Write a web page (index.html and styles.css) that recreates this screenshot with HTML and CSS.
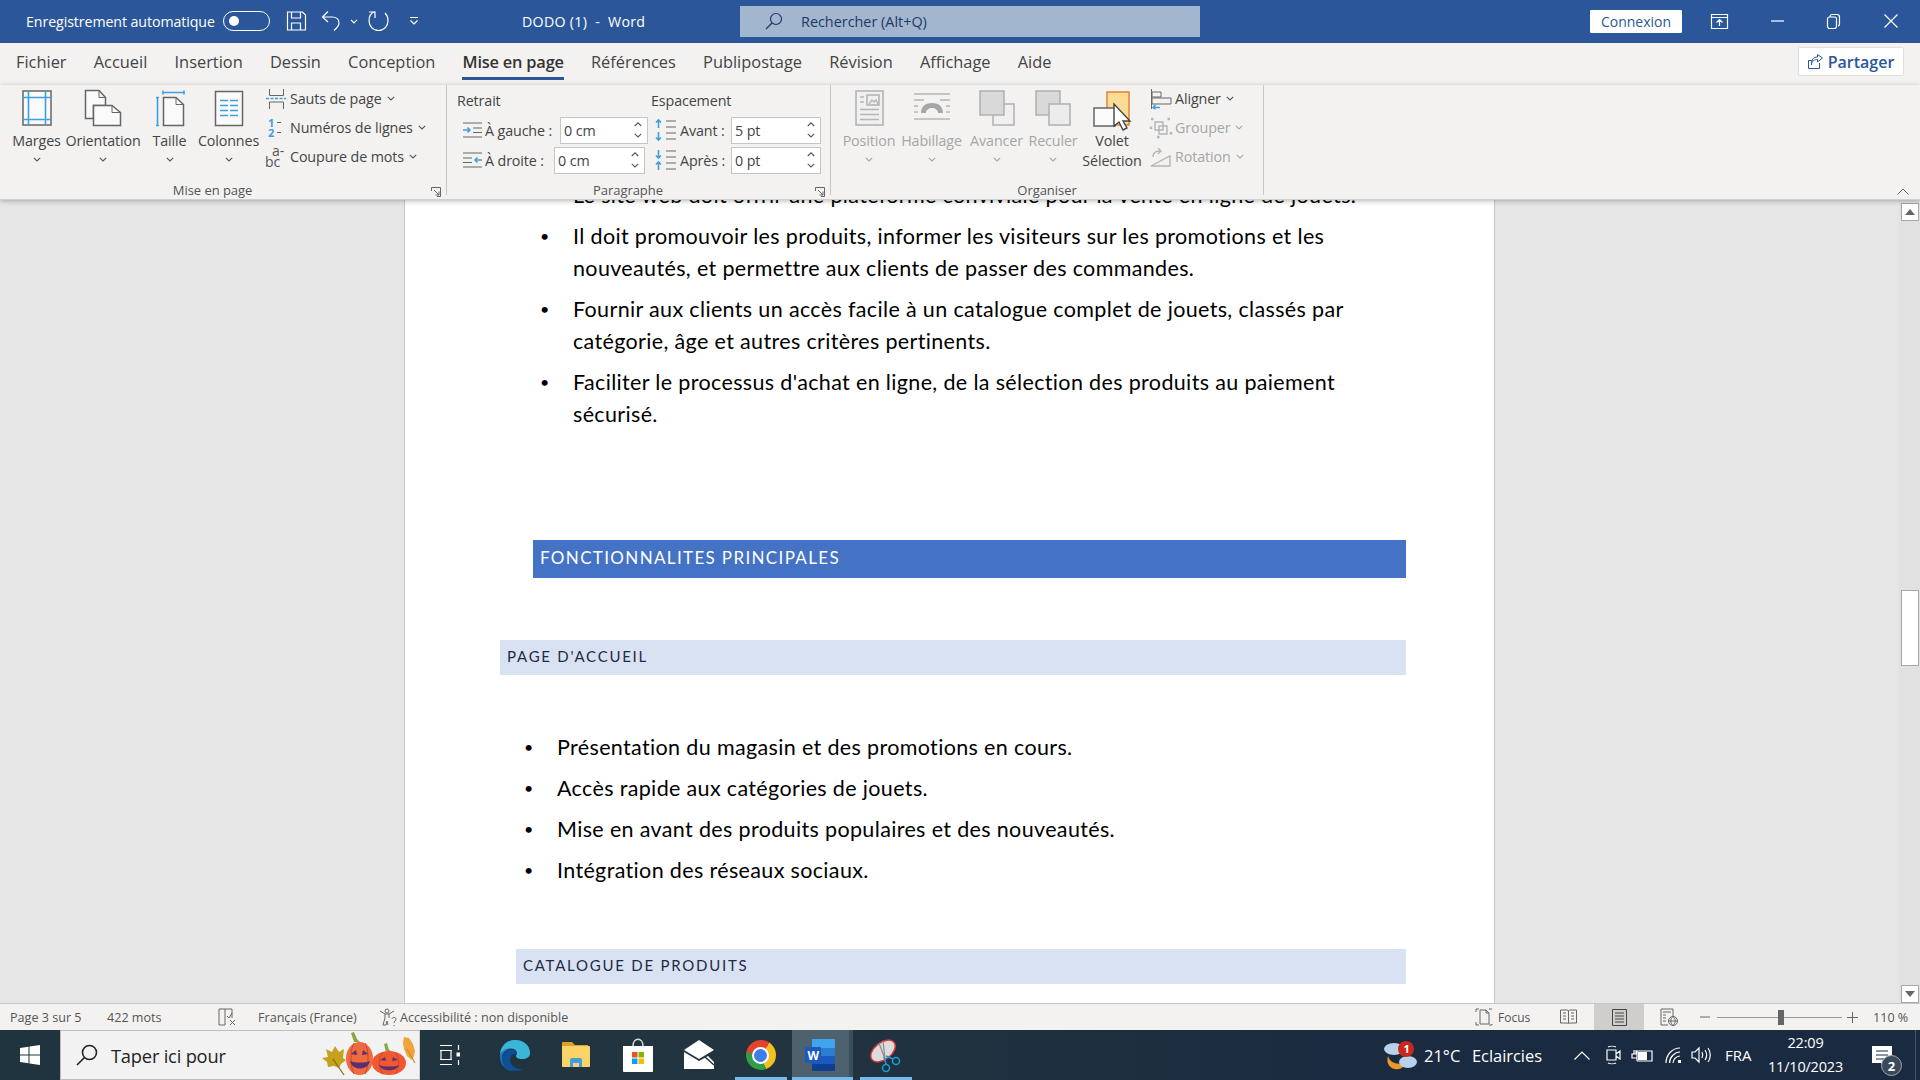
FILE: index.html
```html
<!DOCTYPE html>
<html lang="fr">
<head>
<meta charset="utf-8">
<title>DODO (1) - Word</title>
<link rel="stylesheet" href="styles.css">
</head>
<body>
<div class="app">
  <header class="titlebar">
    <span class="autosave">Enregistrement automatique</span>
    <span class="toggle"><span class="toggle-dot"></span></span>
    <svg class="qat save" width="22" height="20" viewBox="0 0 22 20"><path class="w" d="M2.5 1h15l3 3v15h-18zM6.500 1v6h9V1M6.500 19v-7h9v7"/></svg>
    <svg class="qat undo" width="20" height="22" viewBox="0 0 20 22"><path class="w" d="M7 1.500 1.500 7 7 12M2 7h9c5 0 7 3 7 6 0 3-2 5-5 7.500"/></svg>
    <svg class="qat mini" width="8" height="5" viewBox="0 0 8 5"><path class="w" d="M1 .8l3 3 3-3"/></svg>
    <svg class="qat redo" width="21" height="22" viewBox="0 0 21 22"><path class="w" d="M7 1.500c-4 1.500-6 5-6 9 0 5.500 4 10 9.500 10s9.500-4.500 9.500-10c0-3-1-5.500-3-7.500M7 1.500V8M7 2H1"/></svg>
    <svg class="qat more" width="10" height="10" viewBox="0 0 10 10"><path class="w" d="M1 1.500h8M1.500 4.500 5 8l3.500-3.500"/></svg>
    <span class="doc-name">DODO (1)&nbsp; -&nbsp; Word</span>
    <div class="search">
      <svg width="18" height="18" viewBox="0 0 18 18"><circle class="n" cx="11" cy="7" r="5.500"/><path class="n" d="M7 11 1 17"/></svg>
      <span>Rechercher (Alt+Q)</span>
    </div>
    <span class="connexion">Connexion</span>
    <svg class="win-ic display" width="17" height="15" viewBox="0 0 17 15"><path class="w" d="M.500.500h16v14H.500zM.500 3.500h16M8.500 12V6M5.500 8.500l3-3 3 3"/></svg>
    <svg class="win-ic minim" width="13" height="2" viewBox="0 0 13 2"><path class="w" d="M0 1h13"/></svg>
    <svg class="win-ic restore" width="13" height="15" viewBox="0 0 13 15"><path class="w" d="M3 2.500c0-1 1-2 2-2h5c1.500 0 2.500 1 2.500 2.500v7c0 1-.5 2-1.500 2M.500 5c0-1 1-2 2-2h5c1 0 2 1 2 2v7c0 1.500-1 2.500-2 2.500h-5c-1 0-2-1-2-2.500z"/></svg>
    <svg class="win-ic closex" width="14" height="14" viewBox="0 0 14 14"><path class="w" d="m.5.500 13 13M13.500.500l-13 13"/></svg>
  </header>

  <nav class="tabs">
    <span class="tab">Fichier</span>
    <span class="tab">Accueil</span>
    <span class="tab">Insertion</span>
    <span class="tab">Dessin</span>
    <span class="tab">Conception</span>
    <span class="tab active">Mise en page</span>
    <span class="tab">Références</span>
    <span class="tab">Publipostage</span>
    <span class="tab">Révision</span>
    <span class="tab">Affichage</span>
    <span class="tab">Aide</span>
    <span class="share">
      <svg width="15" height="15" viewBox="0 0 15 15"><path class="b" d="M.500 6.500v8h11V9M.500 6.500h4M3.500 11c0-4 3-5.500 6-5.500V8l5-4-5-3.500V3c-4 0-6.500 3-6 8z"/></svg>
      Partager
    </span>
  </nav>

  <section class="ribbon">
    <div class="group g-page">
      <div class="group-body">
        <div class="big w-marges">
          <svg class="big-ic" width="30" height="36" viewBox="0 0 30 36"><rect class="pg" x="1" y="1" width="28" height="34"/><path class="bl" d="M6.500 1v34M23.500 1v34M1 7.500h28M1 29.500h28"/></svg>
          <span>Marges</span>
          <svg class="chev" width="8" height="5" viewBox="0 0 8 5"><path d="M.8.800 4 4 7.200.8"/></svg>
        </div>
        <div class="big w-orient">
          <svg class="big-ic" width="36" height="36" viewBox="0 0 36 36"><path class="pg" d="M.500.500H14l6.500 7v8h-12v13H.500z"/><path class="pg" d="M8.500 15.500H27l8.500 7v13h-27z"/><path class="dk" d="M14 .500v7h6.500M27 15.500v7h8.500"/></svg>
          <span>Orientation</span>
          <svg class="chev" width="8" height="5" viewBox="0 0 8 5"><path d="M.8.800 4 4 7.200.8"/></svg>
        </div>
        <div class="big w-taille">
          <svg class="big-ic" width="28" height="36" viewBox="0 0 28 36"><path class="bl" d="M7 2.500h21M7 .5v4M28 .5v4M1.500 7.500v28M0 7.500h3M0 35.500h3"/><path class="pg" d="M7.500 7.500H20l7.500 7v21h-20z"/><path class="dk" d="M20 7.500v7h7.500"/></svg>
          <span>Taille</span>
          <svg class="chev" width="8" height="5" viewBox="0 0 8 5"><path d="M.8.800 4 4 7.200.8"/></svg>
        </div>
        <div class="big w-cols">
          <svg class="big-ic" width="28" height="36" viewBox="0 0 28 36"><rect class="pg" x=".5" y="1.500" width="27" height="34"/><path class="bl" d="M5 10.500h8M15 10.500h8M5 15.500h8M15 15.500h8M5 20.500h8M15 20.500h8M5 25.500h8M15 25.500h8"/></svg>
          <span>Colonnes</span>
          <svg class="chev" width="8" height="5" viewBox="0 0 8 5"><path d="M.8.800 4 4 7.200.8"/></svg>
        </div>
        <div class="smalls s-page">
          <div class="small">
            <svg width="24" height="20" viewBox="0 0 24 20"><path class="dk" d="M4.500 0v6.500h14V0M4.500 20v-7h14v7"/><path class="bl dash" d="M1 9.500h20"/></svg>
            <span>Sauts de page</span>
            <svg class="chev" width="8" height="5" viewBox="0 0 8 5"><path d="M.8.800 4 4 7.200.8"/></svg>
          </div>
          <div class="small">
            <svg width="24" height="20" viewBox="0 0 24 20"><text class="num" x="3" y="9">1</text><text class="num" x="3" y="19">2</text><path class="dk" d="M12 4.500h4M12 14.500h4"/></svg>
            <span>Numéros de lignes</span>
            <svg class="chev" width="8" height="5" viewBox="0 0 8 5"><path d="M.8.800 4 4 7.200.8"/></svg>
          </div>
          <div class="small">
            <svg width="24" height="22" viewBox="0 0 24 22"><text class="hy" x="7" y="10">a-</text><text class="hy" x="0" y="21">bc</text></svg>
            <span>Coupure de mots</span>
            <svg class="chev" width="8" height="5" viewBox="0 0 8 5"><path d="M.8.800 4 4 7.200.8"/></svg>
          </div>
        </div>
      </div>
      <div class="group-label"><span>Mise en page</span>
        <svg class="launcher" width="10" height="10" viewBox="0 0 10 10"><path class="dk" d="M.5 4V.500h9v9H6M3 3l5 5M8 4.500V8H4.500"/></svg>
      </div>
    </div>

    <div class="group g-para">
      <div class="group-body para-body">
        <div class="para-col col-indent">
          <div class="para-title">Retrait</div>
          <div class="para-row">
            <svg width="21" height="16" viewBox="0 0 21 16"><path class="dk" d="M1 1h19M11 6h9M11 10.500h9M1 15h19"/><path class="bl" d="M1 8h7M5.500 5.500 8 8l-2.500 2.500"/></svg>
            <span class="p-label">À gauche :</span>
            <div class="spin sp-g"><span>0 cm</span><span class="arrows"><svg class="chev" width="8" height="5" viewBox="0 0 8 5"><path d="M.8 4 4 .8 7.200 4"/></svg><svg class="chev" width="8" height="5" viewBox="0 0 8 5"><path d="M.8.800 4 4 7.200.8"/></svg></span></div>
          </div>
          <div class="para-row">
            <svg width="21" height="16" viewBox="0 0 21 16"><path class="dk" d="M1 1h19M1 6h9M1 10.500h9M1 15h19"/><path class="bl" d="M20 8h-7M15.500 5.500 13 8l2.500 2.500"/></svg>
            <span class="p-label">À droite :</span>
            <div class="spin sp-d"><span>0 cm</span><span class="arrows"><svg class="chev" width="8" height="5" viewBox="0 0 8 5"><path d="M.8 4 4 .8 7.200 4"/></svg><svg class="chev" width="8" height="5" viewBox="0 0 8 5"><path d="M.8.800 4 4 7.200.8"/></svg></span></div>
          </div>
        </div>
        <div class="para-col col-space">
          <div class="para-title">Espacement</div>
          <div class="para-row">
            <svg width="23" height="22" viewBox="0 0 23 22"><path class="bl" d="M3.500 1v8M1 3.500 3.500 1 6 3.500M3.500 13v8M1 18.500 3.500 21 6 18.500"/><path class="dk" d="M11 2h10M11 8h10M11 14h10M11 20h10"/></svg>
            <span class="p-label">Avant :</span>
            <div class="spin sp-s"><span>5 pt</span><span class="arrows"><svg class="chev" width="8" height="5" viewBox="0 0 8 5"><path d="M.8 4 4 .8 7.200 4"/></svg><svg class="chev" width="8" height="5" viewBox="0 0 8 5"><path d="M.8.800 4 4 7.200.8"/></svg></span></div>
          </div>
          <div class="para-row">
            <svg width="23" height="22" viewBox="0 0 23 22"><path class="bl" d="M3.500 1v8M1 6.500 3.500 9 6 6.500M3.500 13v8M1 15.500 3.500 13 6 15.500"/><path class="dk" d="M11 2h10M11 8h10M11 14h10M11 20h10"/></svg>
            <span class="p-label">Après :</span>
            <div class="spin sp-s"><span>0 pt</span><span class="arrows"><svg class="chev" width="8" height="5" viewBox="0 0 8 5"><path d="M.8 4 4 .8 7.200 4"/></svg><svg class="chev" width="8" height="5" viewBox="0 0 8 5"><path d="M.8.800 4 4 7.200.8"/></svg></span></div>
          </div>
        </div>
      </div>
      <div class="group-label"><span>Paragraphe</span>
        <svg class="launcher" width="10" height="10" viewBox="0 0 10 10"><path class="dk" d="M.5 4V.500h9v9H6M3 3l5 5M8 4.500V8H4.500"/></svg>
      </div>
    </div>

    <div class="group g-org">
      <div class="group-body">
        <div class="big off w-pos">
          <svg class="big-ic" width="28" height="36" viewBox="0 0 28 36"><rect class="pg-off" x="1" y="1" width="27" height="34"/><rect class="box-off" x="12" y="5" width="12" height="10"/><path class="gr" d="M5 7h4M5 12h4M5 19.500h19M5 24.500h19M5 29.500h19M14 14l3-4 2 2 2-2 2 4"/></svg>
          <span>Position</span>
          <svg class="chev" width="8" height="5" viewBox="0 0 8 5"><path d="M.8.800 4 4 7.200.8"/></svg>
        </div>
        <div class="big off w-hab">
          <svg class="big-ic" width="36" height="36" viewBox="0 0 36 36"><path class="gr" d="M0 4h36M0 10h10M26 10h10M0 16h4M32 16h4M0 22h4M32 22h4M0 29h36"/><path class="arch" d="M7 23c0-6 4-10 11-10s11 4 11 10h-5c0-3-3-5-6-5s-6 2-6 5z"/></svg>
          <span>Habillage</span>
          <svg class="chev" width="8" height="5" viewBox="0 0 8 5"><path d="M.8.800 4 4 7.200.8"/></svg>
        </div>
        <div class="big off w-av">
          <svg class="big-ic" width="36" height="36" viewBox="0 0 36 36"><rect class="pg-off" x="14" y="14" width="21" height="21"/><rect class="box-off fill-g" x="1" y="1" width="24" height="24"/></svg>
          <span>Avancer</span>
          <svg class="chev" width="8" height="5" viewBox="0 0 8 5"><path d="M.8.800 4 4 7.200.8"/></svg>
        </div>
        <div class="big off w-rec">
          <svg class="big-ic" width="36" height="36" viewBox="0 0 36 36"><rect class="box-off fill-g" x="1" y="1" width="24" height="24"/><rect class="box-off fill-l" x="14" y="14" width="21" height="21"/></svg>
          <span>Reculer</span>
          <svg class="chev" width="8" height="5" viewBox="0 0 8 5"><path d="M.8.800 4 4 7.200.8"/></svg>
        </div>
        <div class="big w-volet">
          <svg class="big-ic" width="38" height="40" viewBox="0 0 38 40"><rect class="orange" x="14" y="1" width="22" height="33"/><rect class="pg" x="1" y="17" width="21" height="18"/><path class="cursor" d="M21 13v22l5-4 4 8 4-2-4-7h7z"/></svg>
          <span class="two-line">Volet<br>Sélection</span>
        </div>
        <div class="smalls s-org">
          <div class="small">
            <svg width="22" height="20" viewBox="0 0 22 20"><path class="dk" d="M1.500 0v20M2 3h9v5H2zM2 9h19v6H2z"/><path class="bl" d="M10 18.500H3M5.500 16 3 18.500 5.500 20"/></svg>
            <span>Aligner</span>
            <svg class="chev" width="8" height="5" viewBox="0 0 8 5"><path d="M.8.800 4 4 7.200.8"/></svg>
          </div>
          <div class="small off">
            <svg width="22" height="20" viewBox="0 0 22 20"><path class="gr dots" d="M1 1h20v18H1z"/><path class="gr" d="M5 4h8v8H5zM9 8h8v8H9z"/></svg>
            <span>Grouper</span>
            <svg class="chev" width="8" height="5" viewBox="0 0 8 5"><path d="M.8.800 4 4 7.200.8"/></svg>
          </div>
          <div class="small off">
            <svg width="22" height="20" viewBox="0 0 22 20"><path class="gr" d="M1 19 20 9v10zM3 10c0-4 3-6 7-6M8 1l3 3-3 3"/></svg>
            <span>Rotation</span>
            <svg class="chev" width="8" height="5" viewBox="0 0 8 5"><path d="M.8.800 4 4 7.200.8"/></svg>
          </div>
        </div>
      </div>
      <div class="group-label"><span>Organiser</span></div>
    </div>
    <div class="group-fill">
      <svg width="12" height="7" viewBox="0 0 12 7"><path class="dk" d="M.5 6.500 6 1l5.500 5.500"/></svg>
    </div>
  </section>

  <main class="workspace">
    <div class="page">
      <ul class="list first-list">
        <li><span>Le site web doit offrir une plateforme conviviale pour la vente en ligne de jouets.</span></li>
        <li><span>Il doit promouvoir les produits, informer les visiteurs sur les promotions et les<br>nouveautés, et permettre aux clients de passer des commandes.</span></li>
        <li><span>Fournir aux clients un accès facile à un catalogue complet de jouets, classés par<br>catégorie, âge et autres critères pertinents.</span></li>
        <li><span>Faciliter le processus d'achat en ligne, de la sélection des produits au paiement<br>sécurisé.</span></li>
      </ul>
      <h1 class="h-main">FONCTIONNALITES PRINCIPALES</h1>
      <h2 class="h-sub h-accueil">PAGE D'ACCUEIL</h2>
      <ul class="list second-list">
        <li><span>Présentation du magasin et des promotions en cours.</span></li>
        <li><span>Accès rapide aux catégories de jouets.</span></li>
        <li><span>Mise en avant des produits populaires et des nouveautés.</span></li>
        <li><span>Intégration des réseaux sociaux.</span></li>
      </ul>
      <h2 class="h-sub h-cat">CATALOGUE DE PRODUITS</h2>
    </div>
    <div class="scrollbar">
      <span class="sb-btn"><svg width="10" height="6" viewBox="0 0 10 6"><path class="tri" d="M5 0l5 6H0z"/></svg></span>
      <span class="sb-thumb"></span>
      <span class="sb-btn"><svg width="10" height="6" viewBox="0 0 10 6"><path class="tri" d="M0 0h10L5 6z"/></svg></span>
    </div>
  </main>

  <footer class="status">
    <span class="st st-page">Page 3 sur 5</span>
    <span class="st st-words">422 mots</span>
    <svg class="st-check" width="18" height="18" viewBox="0 0 18 18"><path class="dk" d="M7 17H1V1h13v9M7 1v16M12 12l5 5M17 12l-5 5M9 8l2 2 3-5"/></svg>
    <span class="st st-lang">Français (France)</span>
    <svg class="st-acc" width="18" height="18" viewBox="0 0 18 18"><circle class="dk" cx="8" cy="3" r="2"/><path class="dk" d="M1 3l5 3h4l5-3M6 6v4l-2 7h3l1-4 1 4M10 6v4M13 11c0-2 4-2 4 0s-2 2-2 4M15 17v1"/></svg>
    <span class="st st-access">Accessibilité : non disponible</span>
    <svg class="st-focus" width="18" height="18" viewBox="0 0 18 18"><path class="dk" d="M1 4V1h3M14 1h3M1 14v3h3M14 17h3v-1M5 2h6l3 3v11H5zM11 2v3h3"/></svg>
    <span class="st st-foc">Focus</span>
    <svg class="st-read" width="17" height="16" viewBox="0 0 17 16"><path class="dk" d="M.5 1h7l1 1 1-1h7v13h-7l-1 1-1-1h-7zM8.500 2v12M3 4h3M3 7h3M3 10h3M11 4h3M11 7h3M11 10h3"/></svg>
    <span class="st-print"><svg width="15" height="17" viewBox="0 0 15 17"><path class="dk2" d="M.5.500h14v16H.5zM3 4h9M3 7h9M3 10h9M3 13h9"/></svg></span>
    <svg class="st-web" width="18" height="18" viewBox="0 0 18 18"><path class="dk" d="M8 17H1V1h12v7M3 4h8M3 7h3M3 10h3M3 13h3"/><circle class="dk" cx="13" cy="13" r="4.500"/><path class="dk" d="M8.500 13h9M13 8.500c-3 3-3 6 0 9M13 8.500c3 3 3 6 0 9"/></svg>
    <svg class="st-minus" width="10" height="2" viewBox="0 0 10 2"><path class="dk" d="M0 1h10"/></svg>
    <span class="slider"><span class="slider-thumb"></span></span>
    <svg class="st-plus" width="11" height="11" viewBox="0 0 11 11"><path class="dk" d="M0 5.500h11M5.500 0v11"/></svg>
    <span class="st st-zoom">110 %</span>
  </footer>

  <footer class="taskbar">
    <span class="start"><svg width="20" height="20" viewBox="0 0 20 20"><path class="white" d="M0 3l8.500-1.200v7.700H0zM9.500 1.600 20 0v9.500H9.500zM0 10.500h8.500v7.700L0 17zM9.500 10.500H20V20L9.500 18.400z"/></svg></span>
    <div class="tb-search">
      <svg width="22" height="22" viewBox="0 0 22 22"><circle class="k" cx="13.500" cy="8.500" r="7"/><path class="k" d="M8.500 13.500 1 21"/></svg>
      <span>Taper ici pour</span>
      <svg class="pumpkins" width="96" height="46" viewBox="0 0 96 46">
        <path class="leaf1" d="M1 26l6-1-2-8 6 3 3-6 4 6 5-3-1 9 3 2-5 4-2 4-5-2-6 1-1-5z"/><path class="stem-l" d="M12 27l11 16"/>
        <path class="leaf2" d="M83 5l5 1 4 6 2 7-1 5-2 4-5-4-3-7-1-6z"/><path class="stem-o" d="M86 17l8 14"/>
        <path class="stem" d="M33 10l-3-9 3-1 3 7 3 3z"/>
        <ellipse class="pk" cx="38.500" cy="26.500" rx="13.500" ry="16.500"/>
        <path class="pk-line" d="M33 11c-4 6-4 24 0 31M44 11c4 6 4 24 0 31"/>
        <path class="pk-f" d="M30 22l5-4 1 5zM47 22l-5-4-1 5zM29 29c5 2 15 2 20 0-2 10-18 10-20 0z"/>
        <path class="stem" d="M65 20l-2-8 3-1 2 7 4 2z"/>
        <ellipse class="pk2" cx="68" cy="31" rx="17" ry="12"/>
        <path class="pk-line" d="M62 20c-5 5-5 17 0 22M74 20c5 5 5 17 0 22"/>
        <path class="pk-f" d="M59 28l5-3 1 4zM77 28l-5-3-1 4zM58 33c5 2 15 2 20 0-2 7-18 7-20 0z"/>
      </svg>
    </div>
    <span class="tb-slot tb-view"><svg width="20" height="20" viewBox="0 0 20 20"><path class="w" d="M0 .5h12M0 5.500h12M0 14.500h12M0 19.500h12M1 5.500v9M11 5.500v9M18.500 0v5M18.500 15v5"/><rect class="white" x="16.500" y="7.500" width="3.500" height="4"/></svg></span>
    <span class="tb-slot"><svg width="32" height="32" viewBox="0 0 32 32"><path class="edge-b" d="M1 17C1 7 8 1 16 1c9 0 15 6 15 13 0 4-4 6-8 6-3 0-6-1-6-3 0-1 1-1 1-3 0-3-3-5-7-4-5 1-8 5-8 9 0 6 4 12 12 13C7 32 1 26 1 17z"/><path class="edge-g" d="M16 1c9 0 15 6 15 13 0 4-4 6-8 6-3 0-6-1-6-3 0-1 1-1 1-3 0-4-6-6-11-4-3 1-5 3-6 5C2 7 8 1 16 1z"/><path class="edge-d" d="M13 32c-6-1-10-6-10-12 0-4 3-8 8-9 4-1 7 1 7 4-3-1-7 1-7 6 0 5 5 9 11 9 2 0 3-.5 5-1.500-3 2-8 4-14 3z"/></svg></span>
    <span class="tb-slot"><svg width="28" height="28" viewBox="0 0 28 28"><path class="folder-b" d="M0 2c0-1 1-1 1-1h9l3 3h13v4H0z"/><path class="folder" d="M0 5h27c1 0 1 1 1 1v19c0 1-1 1-1 1H1c-1 0-1-1-1-1z"/><path class="folder-w" d="M8 26v-7c0-1 1-2 2-2h8c1 0 2 1 2 2v7h-3v-4h-6v4z"/></svg></span>
    <span class="tb-slot"><svg width="30" height="34" viewBox="0 0 30 34"><path class="bag" d="M0 8h30v25c0 1-1 1-1 1H1s-1 0-1-1z"/><path class="bag-h" d="M10 8c0-9 10-9 10 0"/><rect class="ms-r" x="9" y="14" width="5.500" height="5.500"/><rect class="ms-g" x="15.500" y="14" width="5.500" height="5.500"/><rect class="ms-b" x="9" y="20.500" width="5.500" height="5.500"/><rect class="ms-y" x="15.500" y="20.500" width="5.500" height="5.500"/></svg></span>
    <span class="tb-slot"><svg width="30" height="30" viewBox="0 0 30 30"><path class="white" d="M15 0 30 10 15 19 0 10z"/><path class="white" d="M0 12l15 9 9-5 6 6v7H0z"/><path class="mail-l" d="M21 17l9 8"/></svg></span>
    <span class="tb-slot tb-under"><span class="chrome"><span class="chrome-in"></span></span></span>
    <span class="tb-slot tb-word">
      <svg width="30" height="34" viewBox="0 0 30 34"><path class="w1" d="M7 1h22c.5 0 1 .5 1 1v8H7z"/><path class="w2" d="M7 10h23v8H7z"/><path class="w3" d="M7 18h23v8H7z"/><path class="w4" d="M7 26h23v6c0 .5-.5 1-1 1H8c-.5 0-1-.5-1-1z"/><rect class="w5" x="0" y="9" width="16" height="16" rx="1"/><text class="w-t" x="2.500" y="21.500">W</text></svg>
    </span>
    <span class="tb-slot tb-under tb-snip"><svg width="30" height="36" viewBox="0 0 30 36"><ellipse class="sn1" cx="12" cy="14" rx="14" ry="8.500" transform="rotate(-38 12 14)"/><path class="sn2" d="M8 6l6 16M12 4l2 18"/><circle class="sn3" cx="15" cy="31" r="3.500"/><circle class="sn3" cx="25" cy="24" r="3.500"/><path class="sn3" d="M15 27 13 20M22 22l-7-3"/></svg></span>

    <div class="tray">
      <svg class="tr-weather" width="33" height="30" viewBox="0 0 33 30">
        <path class="moon" d="M4 16c2 8 12 10 20 5-3 6-8 9-13 8-6-1-9-7-7-13z"/>
        <ellipse class="cloud" cx="10" cy="9" rx="10" ry="6"/><ellipse class="cloud" cx="24" cy="22" rx="9" ry="6"/>
        <circle class="badge" cx="22" cy="9" r="8"/><text class="badge-t" x="19.500" y="13">1</text>
      </svg>
      <span class="tr-temp">21°C</span>
      <span class="tr-sky">Eclaircies</span>
      <svg class="tr-up" width="16" height="9" viewBox="0 0 16 9"><path class="w" d="M.5 8.500 8 1l7.500 7.500"/></svg>
      <svg class="tr-meet" width="15" height="18" viewBox="0 0 15 18"><path class="w" d="M2 1c2-1 6-1 8 0M2 17c2 1 6 1 8 0M1 4h9v10H1zM10 8l4-3v8l-4-3"/></svg>
      <svg class="tr-batt" width="21" height="13" viewBox="0 0 21 13"><path class="w" d="M5 2h15v10H5M5 2v3M5 9v3M0 5h5v4H0zM2 1v4M4 1v4"/><rect class="white" x="6" y="3" width="9" height="8"/></svg>
      <svg class="tr-wifi" width="16" height="16" viewBox="0 0 16 16"><path class="w" d="M1 16C1 8 7 1 15 1M4.500 16C4.500 10 10 5 15 5M8 16c0-3 3-7 7-7"/><rect class="white" x="13" y="13" width="3" height="3"/></svg>
      <svg class="tr-vol" width="20" height="16" viewBox="0 0 20 16"><path class="w" d="M1 5h3l4-4v14l-4-4H1zM11 5c1 2 1 4 0 6M14 3c2 3 2 7 0 10M17 1c3 4 3 10 0 14"/></svg>
      <span class="tr-lang">FRA</span>
      <span class="tr-clock"><span>22:09</span><span>11/10/2023</span></span>
      <span class="tr-note">
        <svg width="20" height="18" viewBox="0 0 20 18"><path class="white" d="M0 0h20v17h-8l-3 1v-1H0z"/><path class="note-l" d="M4 5h12M4 9h12M4 13h8"/></svg>
        <span class="note-badge">2</span>
      </span>
    </div>
  </footer>
</div>
</body>
</html>
```
FILE: styles.css
```css
* { box-sizing: border-box; }
html, body { margin: 0; padding: 0; }
body { font-family: "Open Sans", "Noto Sans", sans-serif; color: #444; overflow: hidden; }
svg { display: block; flex: none; overflow: visible; }
svg path, svg rect, svg circle, svg ellipse { fill: none; }
.app { width: 1920px; height: 1080px; display: flex; flex-direction: column; overflow: hidden; background: #f3f2f1; }

/* stroke helpers */
.w { stroke: #fff; stroke-width: 1.2; }
svg .white { fill: #fff; }
.n { stroke: #1f3864; stroke-width: 1.2; }
.b { stroke: #2b579a; stroke-width: 1; }
.k { stroke: #222; stroke-width: 1.6; }
.dk { stroke: #666; stroke-width: 1; }
.dk2 { stroke: #444; stroke-width: 1; }
.bl { stroke: #3f9fdf; stroke-width: 1.6; }
.dash { stroke-dasharray: 3 1.5; }
.gr { stroke: #b5b5b5; stroke-width: 1.4; }
.dots { stroke-dasharray: 2.500 14; stroke-width: 2.500; }
svg .pg { fill: #fafafa; stroke: #666; stroke-width: 1.5; }
svg .pg-off { fill: #f0f0f0; stroke: #b0b0b0; stroke-width: 1.5; }
svg .box-off { stroke: #b0b0b0; stroke-width: 1.500; }
svg .fill-g { fill: #d9d9d9; }
svg .fill-l { fill: #ececec; }
svg .arch { fill: #a6a6a6; }
svg .orange { fill: #fadc94; stroke: #e8883a; stroke-width: 1.6; }
svg .cursor { fill: #fff; stroke: #444; stroke-width: 1.4; }
.num { font: 700 11px "Open Sans", sans-serif; fill: #3f9fdf; }
.hy { font: 400 14px "Open Sans", sans-serif; fill: #555; }

/* title bar */
.titlebar { height: 43px; background: #2b579a; color: #fff; display: flex; align-items: center; flex: none; font-size: 14.200px; padding-bottom: 1px; }
.autosave { margin-left: 26px; width: 197px; white-space: nowrap; letter-spacing: -.08px; }
.toggle { width: 47px; height: 20px; border: 1.500px solid #fff; border-radius: 10px; display: flex; align-items: center; padding-left: 5px; }
.toggle-dot { width: 10px; height: 10px; border-radius: 50%; background: #fff; }
.qat.save { margin-left: 15px; }
.qat.undo { margin-left: 14px; }
.qat.mini { margin-left: 9px; }
.qat.redo { margin-left: 10px; }
.qat.more { margin-left: 20px; }
.doc-name { margin-left: 103px; width: 218px; white-space: nowrap; letter-spacing: .3px; }
.search { width: 460px; height: 31px; background: #a3b6cf; color: #1f3864; display: flex; align-items: center; padding-left: 25px; gap: 18px; font-size: 14.400px; }
.connexion { margin-left: 390px; width: 92px; height: 23px; background: #fff; color: #2b579a; border-radius: 1px; display: flex; align-items: center; justify-content: center; font-size: 14px; }
.win-ic.display { margin-left: 29px; }
.win-ic.minim { margin-left: 43px; }
.win-ic.restore { margin-left: 43px; }
.win-ic.closex { margin-left: 44px; }

/* tabs */
.tabs { height: 42px; flex: none; display: flex; align-items: center; padding-left: 16px; gap: 27.200px; font-size: 16.400px; color: #444; }
.tab { position: relative; white-space: nowrap; padding-bottom: 6px; }
.tab.active { color: #333; font-weight: 600; letter-spacing: -.2px; }
.tab.active::after { content: ""; position: absolute; left: 0; right: 0; bottom: -1px; height: 3px; background: #2b579a; }
.share { margin: 0 16px 5px auto; width: 106px; height: 29px; background: #fff; border: 1px solid #e1dfdd; border-radius: 2px; color: #2b579a; font-weight: 600; font-size: 16px; display: flex; align-items: center; justify-content: center; gap: 5px; }

/* ribbon */
.ribbon { height: 115px; flex: none; display: flex; font-size: 14.300px; letter-spacing: -.12px; background: #f3f2f1; position: relative; z-index: 5; box-shadow: 0 1px 5px rgba(0,0,0,.28); border-bottom: 1px solid #d0d0d0; }
.group { display: flex; flex-direction: column; border-right: 1px solid #c8c6c4; margin-bottom: 4px; flex: none; }
.g-page { width: 447px; }
.g-para { width: 384px; }
.g-org { width: 433px; }
.group-fill { flex: 1; display: flex; align-items: flex-end; justify-content: flex-end; padding: 0 11px 4px; }
.group-body { height: 97px; display: flex; padding-top: 5px; flex: none; }
.g-page .group-body { padding-left: 8px; }
.g-org .group-body { padding-left: 9px; }
.group-label { flex: 1; font-size: 13px; line-height: 16px; letter-spacing: -.05px; color: #555; display: flex; align-items: flex-start; justify-content: center; position: relative; padding-right: 21px; }
.g-org .group-label { padding-right: 0; }
.launcher { position: absolute; right: 5px; top: 5px; }

.big { display: flex; flex-direction: column; align-items: center; flex: none; white-space: nowrap; }
.big-ic { height: 36px; margin-bottom: 5px; }
.big > span { height: 20px; line-height: 20px; }
.big .chev { margin-top: 6px; }
.chev path { stroke: #555; stroke-width: 1.1; }
.off { color: #a6a6a6; }
.off .chev path { stroke: #a6a6a6; }
.w-marges { width: 57px; }
.w-orient { width: 76px; }
.w-taille { width: 57px; }
.w-cols { width: 61px; }
.s-page { margin-left: 6px; }
.w-pos { width: 58px; }
.w-hab { width: 67px; }
.w-av { width: 63px; }
.w-rec { width: 50px; }
.w-volet { width: 68px; }
.w-volet .big-ic { height: 40px; margin-bottom: 1px; margin-top: 1px; }
.big > .two-line { height: 40px; text-align: center; margin-top: -1px; }
.s-org { margin-left: 4px; }
.s-org .small > svg:first-child { margin-right: 2px; }
.smalls { display: flex; flex-direction: column; margin-top: -6px; flex: none; }
.small { height: 29px; display: flex; align-items: center; gap: 1px; white-space: nowrap; }
.small .chev { margin-left: 4px; }

.para-body { padding: 0; }
.para-col { display: flex; flex-direction: column; flex: none; }
.col-indent { width: 204px; padding-left: 10px; }
.para-title { height: 30px; line-height: 31px; }
.para-row { height: 30px; display: flex; align-items: center; padding-left: 5px; white-space: nowrap; }
.para-row > svg { margin-right: 2px; }
.p-label { white-space: nowrap; }
.col-indent .para-row:nth-child(2) .p-label { width: 75px; }
.col-indent .para-row:nth-child(3) .p-label { width: 69px; }
.col-space .para-row { padding-left: 4px; }
.col-space .p-label { width: 51px; }
.spin { height: 27px; background: #fff; border: 1px solid #c8c6c4; display: flex; align-items: center; justify-content: space-between; padding: 0 5px 0 3px; }
.sp-g { width: 88px; }
.sp-d { width: 91px; }
.sp-s { width: 90px; }
.arrows { display: flex; flex-direction: column; gap: 6px; }

/* document */
.workspace { flex: 1; display: flex; min-height: 0; background: #e6e6e6; overflow: hidden; }
.page { width: 1091px; margin-left: 404px; background: #fff; border-left: 1px solid #c8c8c8; border-right: 1px solid #c8c8c8; font-family: "Lato", "Liberation Sans", sans-serif; color: #000; font-size: 21.500px; letter-spacing: .35px; padding-bottom: 100px; }
.list { list-style: none; margin: 0; padding: 0; display: flex; flex-direction: column; gap: 9px; white-space: nowrap; }
.list li { display: flex; line-height: 32px; }
.list li::before { content: "•"; flex: none; width: 33px; font-size: 16px; }
.first-list { margin-top: -21px; padding-left: 135px; }
.second-list { margin-top: 56px; padding-left: 119px; }
.second-list li::before { width: 33px; }
.h-main { margin: 110px 0 0 128px; width: 873px; height: 38px; background: #4472c4; color: #fff; font-weight: 400; font-size: 17px; line-height: 36px; padding-left: 7px; letter-spacing: 1.350px; white-space: nowrap; }
.h-sub { margin: 0; background: #d9e2f3; color: #1f2a44; font-weight: 400; font-size: 15px; height: 35px; line-height: 33px; padding-left: 7px; letter-spacing: 1.750px; white-space: nowrap; }
.h-accueil { margin: 62px 0 0 95px; width: 906px; }
.h-cat { margin: 63px 0 0 111px; width: 890px; }
.scrollbar { margin-left: auto; width: 21px; background: #e1e1e1; display: flex; flex-direction: column; align-items: center; justify-content: space-between; padding-top: 3px; position: relative; }
.sb-btn { width: 18px; height: 18px; background: #fff; border: 1px solid #a8a8a8; display: flex; align-items: center; justify-content: center; }
svg .tri { fill: #666; }
.sb-thumb { width: 18px; height: 76px; background: #fff; border: 1px solid #a8a8a8; position: absolute; top: 390px; }

/* status bar */
.status { height: 27px; flex: none; border-top: 1px solid #c6c6c6; background: #f3f2f1; display: flex; align-items: center; font-size: 12.600px; color: #555; position: relative; z-index: 3; }
.st { white-space: nowrap; }
.st-page { margin-left: 10px; width: 97px; }
.st-words { width: 111px; }
.st-check { margin-right: 22px; }
.st-lang { width: 121px; }
.st-access { margin-left: 3px; width: 1075px; }
.st-foc { margin-left: 5px; width: 62px; font-size: 12px; }
.st-read { margin-right: 17px; }
.st-print { width: 50px; height: 26px; background: #cfcecd; display: flex; align-items: center; justify-content: center; margin-right: 16px; }
.st-minus { margin-left: 22px; }
.slider { width: 125px; height: 1px; background: #999; margin-left: 7px; position: relative; }
.slider-thumb { position: absolute; left: 61px; top: -7px; width: 6px; height: 15px; background: #666; }
.st-plus { margin-left: 5px; }
.st-zoom { margin-left: 15px; }

/* task bar */
.taskbar { height: 50px; flex: none; background: linear-gradient(90deg, #20343f 0%, #21343f 40%, #1a2a40 75%, #1a2a40 100%); display: flex; align-items: center; color: #fff; position: relative; }
.taskbar::after { content: ""; position: absolute; right: 4px; top: 0; bottom: 0; width: 1px; background: #46556a; }
.start { width: 60px; height: 50px; display: flex; align-items: center; justify-content: center; }
.tb-search { width: 360px; height: 50px; background: #f2f2f2; border: 1px solid #bdbdbd; border-right: 1px solid #ccc; color: #222; display: flex; align-items: center; padding-left: 15px; font-size: 18.300px; position: relative; }
.tb-search > span { margin-left: 13px; letter-spacing: -.2px; }
.pumpkins { margin-left: auto; margin-right: 2px; }
svg .leaf1 { fill: #c6a11d; }
.stem-l { stroke: #8a6d10; stroke-width: 1.200; }
svg .leaf2 { fill: #f0a53c; }
.stem-o { stroke: #d08a28; stroke-width: 1.200; }
svg .stem { fill: #8aa742; }
svg .pk { fill: #ef6a3e; }
svg .pk2 { fill: #f0592f; }
.pk-line { stroke: #c8472c; stroke-width: 1; }
svg .pk-f { fill: #5d2f72; }

.tb-slot { width: 61.500px; height: 50px; display: flex; align-items: center; justify-content: center; position: relative; flex: none; }
.tb-view { width: 64px; justify-content: flex-start; padding-left: 20px; }
svg .edge-b { fill: #1b78c8; }
svg .edge-g { fill: #3bb6d6; }
svg .edge-d { fill: #0f4f98; }
svg .folder-b { fill: #d8a326; }
svg .folder { fill: #fbd468; }
svg .folder-w { fill: #3f9fdf; }
svg .bag { fill: #fff; }
.bag-h { stroke: #ddd; stroke-width: 1.500; }
svg .ms-r { fill: #f25022; }
svg .ms-g { fill: #7fba00; }
svg .ms-b { fill: #00a4ef; }
svg .ms-y { fill: #ffb900; }
.mail-l { stroke: #21343f; stroke-width: 1.500; }
.chrome { width: 30px; height: 30px; border-radius: 50%; background: conic-gradient(from 35deg, #f4c020 0 125deg, #2f9e44 125deg 245deg, #e5412f 245deg 360deg); display: flex; align-items: center; justify-content: center; }
.chrome-in { width: 13px; height: 13px; border-radius: 50%; background: #3d7de8; border: 2.500px solid #fff; box-sizing: content-box; }
.tb-under::after, .tb-word::after { content: ""; position: absolute; left: 5px; right: 5px; bottom: 0; height: 3px; background: #76b9ed; }
.tb-word { background: #4d626e; border-right: 4px solid #39505c; }
.tb-word::after { left: 0; right: -4px; }
svg .w1 { fill: #41a5ee; }
svg .w2 { fill: #2b7cd3; }
svg .w3 { fill: #185abd; }
svg .w4 { fill: #103f91; }
svg .w5 { fill: #185abd; }
.w-t { font: 700 12px "Open Sans", sans-serif; fill: #fff; }
.tb-snip { margin-left: 2px; }
svg .sn1 { fill: #dcdcdc; stroke: #d8383a; stroke-width: 1.500; }
.sn2 { stroke: #8a8a8a; stroke-width: 1.200; }
.sn3, svg circle.sn3 { stroke: #1b9ad6; stroke-width: 1.600; }

.tray { position: absolute; left: 1384px; top: 0; height: 50px; width: 536px; display: flex; align-items: center; font-size: 16.500px; }
.tr-temp { margin-left: 7px; width: 48px; }
.tr-sky { width: 102px; letter-spacing: -.05px; }
.tr-meet { margin-left: 16px; }
.tr-batt { margin-left: 11px; }
.tr-wifi { margin-left: 12px; }
.tr-vol { margin-left: 10px; }
.tr-lang { margin-left: 14px; font-size: 15px; width: 43px; }
.tr-clock { width: 75px; display: flex; flex-direction: column; align-items: center; font-size: 14.500px; line-height: 24px; letter-spacing: -.2px; white-space: nowrap; }
.tr-note { margin-left: 29px; position: relative; }
.note-l { stroke: #1a2a40; stroke-width: 1.200; }
.note-badge { position: absolute; left: 9px; top: 9px; width: 21px; height: 21px; border-radius: 50%; background: #3a4a5a; border: 1.500px solid #a0a8b0; font-size: 13px; font-weight: 700; display: flex; align-items: center; justify-content: center; }
svg .moon { fill: #f0972a; }
svg .cloud { fill: #b9d1ea; }
svg .badge { fill: #c8281e; }
.badge-t { font: 700 11px "Open Sans", sans-serif; fill: #fff; }
```
